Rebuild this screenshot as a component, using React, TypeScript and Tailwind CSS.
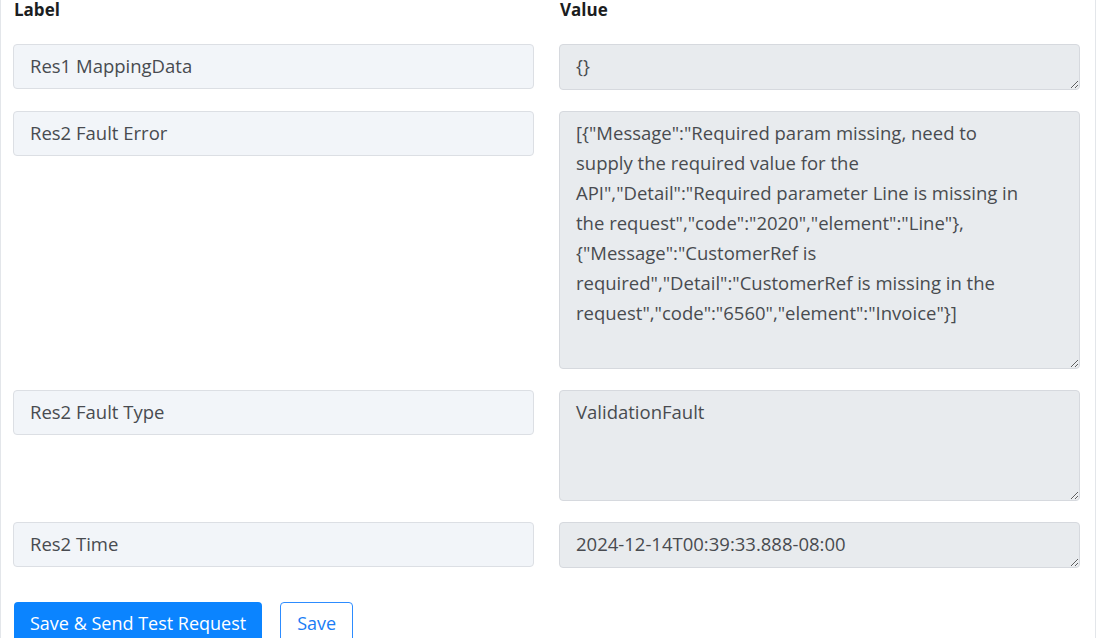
import React from 'react'

interface MappingRow {
  label: string
  value: string
  height: string
}

// fault payload is shown pre-wrapped so the breaks stay put at this column width
const faultError = [
  '[{"Message":"Required param missing, need to',
  'supply the required value for the',
  'API","Detail":"Required parameter Line is missing in',
  'the request","code":"2020","element":"Line"},',
  '{"Message":"CustomerRef is',
  'required","Detail":"CustomerRef is missing in the',
  'request","code":"6560","element":"Invoice"}]',
].join('\n')

const rows: MappingRow[] = [
  { label: 'Res1 MappingData', value: '{}', height: 'h-[46px]' },
  { label: 'Res2 Fault Error', value: faultError, height: 'h-[258px]' },
  { label: 'Res2 Fault Type', value: 'ValidationFault', height: 'h-[111px]' },
  { label: 'Res2 Time', value: '2024-12-14T00:39:33.888-08:00', height: 'h-[46px]' },
]

export default function App() {
  return (
    <div className="min-h-[638px] w-full border-x border-[#e3e6ea] bg-white font-['Open_Sans',sans-serif] text-[#484b50]">
      <div className="grid grid-cols-[520px_520px] gap-x-[26px] pl-[13px]">
        <div className="h-[23px] text-[17px] font-bold leading-[20px] text-[#1b1d21]">Label</div>
        <div className="h-[23px] text-[17px] font-bold leading-[20px] text-[#1b1d21]">Value</div>
      </div>

      <div className="mt-[21px] flex flex-col gap-[21px] pl-[12px]">
        {rows.map((row) => (
          <div key={row.label} className="grid grid-cols-[521px_521px] items-start gap-x-[25px]">
            <input
              readOnly
              value={row.label}
              className="h-[45px] rounded-[4px] border border-[#dcdfe4] bg-[#f2f5f9] px-[16px] pb-[2px] text-[18.5px] text-[#484b50] outline-none"
            />
            <textarea
              readOnly
              value={row.value}
              className={`${row.height} resize-y rounded-[4px] border border-[#d6d9de] bg-[#e8ebee] px-[16px] pt-[6px] pb-[8px] text-[18.5px] leading-[30px] whitespace-pre-wrap text-[#484b50] outline-none`}
            />
          </div>
        ))}
      </div>

      <div className="mt-[34px] flex items-center gap-[18px] pl-[13px]">
        <button className="h-[42px] rounded-[4px] bg-[#0b84ff] px-[16px] text-[18px] font-medium text-white">
          Save &amp; Send Test Request
        </button>
        <button className="h-[42px] rounded-[4px] border border-[#2d8cff] bg-white px-[16px] text-[18px] font-medium text-[#1a7cf5]">
          Save
        </button>
      </div>
    </div>
  )
}
